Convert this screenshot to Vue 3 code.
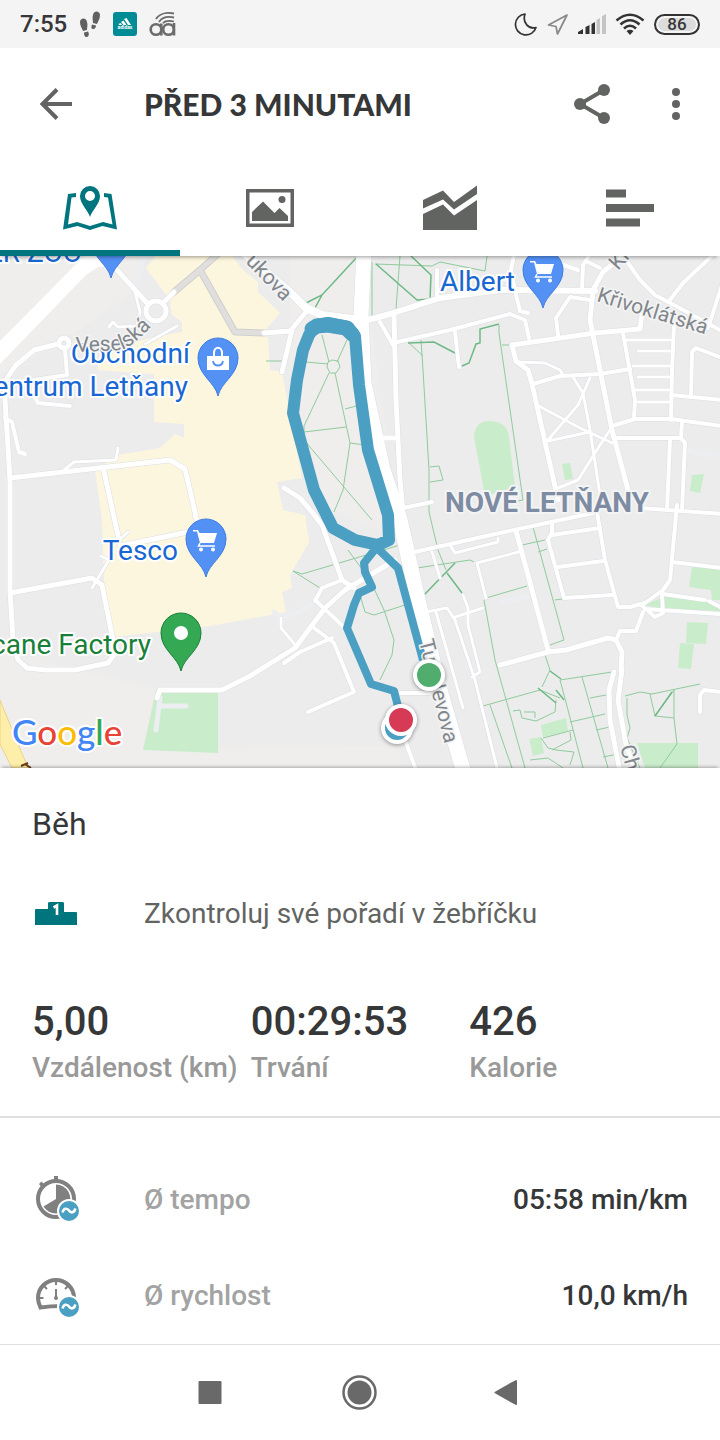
<template>
  <div class="screen">
    <div class="status-bar">
      <div class="status-group">
        <span class="status-time">7:55</span>
        <svg width="22" height="28" viewBox="0 0 22 28" fill="#616161">
          <path d="M1 12C1 8 7 7 8 12C9 15 8 17 8 20L4 21C3 18 1 16 1 12ZM5 22.500L9 21.500C11 25 9 27 7.500 27C5.500 27 5 25 5 22.500Z"/>
          <path d="M14 5C15 0 21 1 21 5C21 9 19 11 18 14L14 13C14 10 13 8 14 5ZM13 14.500L17 15.500C17 18 15.500 19.500 14 19C12 19 12 17 13 14.500Z"/>
        </svg>
        <svg width="24" height="24" viewBox="0 0 24 24">
          <rect width="24" height="24" rx="3" fill="#008c95"/>
          <g fill="#fff">
            <path d="M11 7L13.500 6L18 13H15Z"/>
            <path d="M8 10L10.500 8.500L13.500 13H10.500Z"/>
            <path d="M5.500 12L7.500 11L9 13H6Z"/>
          </g>
          <text x="12" y="17" text-anchor="middle" fill="#fff" class="app-mark">adidas</text>
        </svg>
        <svg width="27" height="26" viewBox="0 0 27 26" fill="none" stroke="#6b6b6b" stroke-width="2.600">
          <circle cx="7" cy="18.500" r="5.300"/>
          <path d="M12.300 12.500V24.500"/>
          <circle cx="19.500" cy="18.500" r="5.300"/>
          <path d="M25 24.500V12"/>
          <path d="M7 8C10 3 17 1 25 2.500M10 11C13 6.500 18 5 25 6.500M14 12C16 10 19 9 25 10.500" stroke-width="1.800"/>
        </svg>
      </div>
      <div class="status-group status-right">
        <svg width="24" height="24" viewBox="0 0 24 24" fill="none" stroke="#333" stroke-width="1.700" stroke-linejoin="round">
          <path d="M11 2A10.500 10.500 0 1 0 22 15.500C15 17.500 8 11 11 2Z"/>
        </svg>
        <svg width="22" height="24" viewBox="0 0 22 24" fill="none" stroke="#888" stroke-width="1.700" stroke-linejoin="round">
          <path d="M20 3L1.500 13L9 14.500L10.500 22Z"/>
        </svg>
        <svg width="28" height="22" viewBox="0 0 28 22">
          <path d="M0 21V19L5 16V21Z" fill="#333"/>
          <path d="M7.500 21V14L11.500 12V21ZM13.500 21V11L17 9V21Z" fill="#333"/>
          <path d="M18.500 21V7L22 5V21ZM24 21V3L28 1V21Z" fill="#c4c4c4"/>
        </svg>
        <svg width="30" height="22" viewBox="0 0 30 22" fill="none" stroke="#333" stroke-width="2.600">
          <path d="M1.500 7.500Q15 -4 28.500 7.500"/>
          <path d="M5.500 11.500Q15 3 24.500 11.500"/>
          <path d="M9 15.500Q15 10 21 15.500"/>
          <path d="M15 22L11.500 18Q15 15.500 18.500 18Z" fill="#333" stroke="none"/>
        </svg>
        <span class="battery">86</span>
      </div>
    </div>

    <header class="header">
      <button class="icon-button" type="button" aria-label="Zpět">
        <svg width="48" height="48" viewBox="0 0 48 48" fill="none" stroke="#626462" stroke-width="4">
          <path d="M40 24H11M25 9.500L10.500 24L25 38.500"/>
        </svg>
      </button>
      <h1 class="title">PŘED 3 MINUTAMI</h1>
      <button class="icon-button" type="button" aria-label="Sdílet">
        <svg width="48" height="48" viewBox="0 0 48 48" fill="#626462">
          <path d="M36 10L12 24L36 38" fill="none" stroke="#626462" stroke-width="4"/>
          <circle cx="36" cy="10" r="6"/>
          <circle cx="12" cy="24" r="6"/>
          <circle cx="36" cy="38" r="6"/>
        </svg>
      </button>
      <button class="icon-button menu-button" type="button" aria-label="Další možnosti">
        <svg width="48" height="48" viewBox="0 0 48 48" fill="#626462">
          <circle cx="24" cy="12" r="4"/>
          <circle cx="24" cy="24" r="4"/>
          <circle cx="24" cy="36" r="4"/>
        </svg>
      </button>
    </header>

    <div class="tabs" role="tablist">
      <button
        v-for="tab in tabs"
        :key="tab.id"
        type="button"
        role="tab"
        class="tab"
        :class="{ 'tab-active': tab.id === activeTab }"
        :aria-selected="tab.id === activeTab"
        :aria-label="tab.label"
        @click="activeTab = tab.id"
      >
        <svg width="56" height="48" viewBox="0 0 56 48" fill="currentColor">
          <path v-for="d in tab.shapes" :key="d" :d="d" fill-rule="evenodd"/>
        </svg>
      </button>
    </div>

    <svg class="map" viewBox="0 256 720 512" role="img" aria-label="Mapa trasy">
      <rect y="256" width="720" height="512" fill="#ececec"/>
      <path d="M0 256H140L136 290L60 343L0 375ZM290 256H362L400 540L310 500L290 420ZM0 650L160 690L143 750L400 746V768H0Z" fill="#efeeec"/>
      <path :d="commercialArea" fill="#fdf6de"/>
      <path v-for="d in parks" :key="d" :d="d" fill="#c9edca"/>

      <g fill="none" stroke-width="1">
        <path v-for="d in trails" :key="d" :d="d" stroke="#8fcb9d"/>
        <path v-for="d in darkTrails" :key="d" :d="d" stroke="#6db985" stroke-width="1.500"/>
      </g>

      <g fill="none" stroke-linejoin="round" stroke-linecap="round">
        <path v-for="d in accessRoads" :key="d" :d="d" stroke="#eceef2" stroke-width="5"/>
        <path d="M174 292L200 270L220 252M200 270L235 332L264 333" stroke="#cfcfce" stroke-width="7"/>
        <path d="M174 292L200 270L220 252M200 270L235 332L264 333" stroke="#e0dfdd" stroke-width="5"/>
        <path v-for="road in roads" :key="road.d" :d="road.d" stroke="#dcdee3" :stroke-width="road.w + 1"/>
        <path v-for="road in roads" :key="road.d" :d="road.d" stroke="#fff" :stroke-width="road.w"/>
      </g>
      <path d="M0 341L78 262L84 256H114V266L98 267L86 275L0 364Z" fill="#fff"/>
      <path d="M0 700L28 768H12L0 744Z" fill="#fdeeaa" stroke="#ead28c"/>
      <path d="M21 766L28 763M25 764L31 768" stroke="#6b3e14" stroke-width="2"/>

      <g fill="none" stroke="#4b9fc3" stroke-linejoin="round">
        <path d="M309 335L316 325L328 323L348 327L355 336L359 385L368 450L388 515L389 540L378 545L355 540L333 528L314 490L293 413L297 380L303 350Z" stroke-width="12"/>
        <path d="M312 329L317 326L328 325L346 328L352 334" stroke-width="15" stroke-linecap="round"/>
        <path d="M374 545L398 568L423 660" stroke-width="8"/>
        <path d="M377 547L364 563L365 572L372 587L359 593L354 605L347 628L371 684L394 691L400 714" stroke-width="8"/>
      </g>

      <text class="district-label" x="547" y="512" text-anchor="middle">NOVÉ LETŇANY</text>
      <g class="place-labels" text-anchor="end">
        <text
          v-for="place in places"
          :key="place.name"
          :x="place.x"
          :y="place.y"
          :fill="place.color"
        >{{ place.name }}</text>
      </g>
      <g class="street-labels">
        <path id="street-veselska" d="M76 352L120 350Q134 348 164 312" fill="none" stroke="none"/>
        <text><textPath href="#street-veselska">Veselská</textPath></text>
        <text transform="translate(245 262) rotate(46)">ukova</text>
        <text transform="translate(596 301) rotate(17)">Křivoklátská</text>
        <text transform="translate(618 271) rotate(-48)">Klá</text>
        <text transform="translate(419 641) rotate(76)">Tupolevova</text>
        <text transform="translate(620 747) rotate(74)">Ch</text>
      </g>

      <g v-for="pin in pins" :key="pin.x" :transform="`translate(${pin.x} ${pin.y})`">
        <path
          d="M0 38C-3 24 -20 17 -20 0A20 20 0 0 1 20 0C20 17 3 24 0 38Z"
          :fill="pin.fill"
          :stroke="pin.stroke"
        />
        <circle v-if="pin.icon === 'dot'" r="7" fill="#fff"/>
        <g v-if="pin.icon === 'cart'" fill="#fff">
          <path d="M-13 -9H-8L-6.500 -6H11L8 4H-6L-9 -7.500H-13Z"/>
          <path d="M-6 4L-7.500 7H9" fill="none" stroke="#fff" stroke-width="1.500"/>
          <circle cx="-5" cy="10.500" r="2"/>
          <circle cx="7" cy="10.500" r="2"/>
        </g>
        <g v-if="pin.icon === 'bag'" fill="none">
          <path d="M-11 -2H11V12H-11Z" fill="#fff"/>
          <path d="M-4 -2V-5C-4 -12 4 -12 4 -5V-2" stroke="#fff" stroke-width="2"/>
          <path d="M-5 3C-4 9 4 9 5 3" stroke="#5491f5" stroke-width="1.800"/>
        </g>
      </g>

      <g class="markers">
        <circle cx="397" cy="728" r="14" fill="#4b9fc3"/>
        <circle cx="429" cy="675" r="14" fill="#50ad6e"/>
        <circle cx="401" cy="720" r="14" fill="#d73a54"/>
      </g>

      <text class="google" x="12" y="745">
        <tspan fill="#4285f4">G</tspan><tspan fill="#ea4335">o</tspan><tspan fill="#fbbc05">o</tspan><tspan fill="#4285f4">g</tspan><tspan fill="#34a853">l</tspan><tspan fill="#ea4335">e</tspan>
      </text>
    </svg>

    <main class="details">
      <h2 class="sport">Běh</h2>
      <a class="leaderboard" href="#">
        <svg width="48" height="48" viewBox="0 0 48 48">
          <path d="M3 35V20Q3 19 4 19H16V13Q16 12 18 12H30Q32 12 32 13V22H44Q45 22 45 23V35Z" fill="#00757d"/>
          <path d="M21.500 17.500L25 15.500V25" fill="none" stroke="#fff" stroke-width="2.600"/>
        </svg>
        <span>Zkontroluj své pořadí v žebříčku</span>
      </a>
      <dl class="stats">
        <div v-for="stat in stats" :key="stat.label" class="stat">
          <dd class="stat-value">{{ stat.value }}</dd>
          <dt class="stat-label">{{ stat.label }}</dt>
        </div>
      </dl>
    </main>

    <dl class="averages">
      <div class="average">
        <svg width="48" height="48" viewBox="0 0 48 48" fill="none" stroke="#808080">
          <circle cx="24" cy="23" r="18" stroke-width="4"/>
          <path d="M22 0H26V5H22ZM7 8L9.500 5.500L13 9L10 12Z" fill="#808080" stroke="none"/>
          <path d="M24 23V8.500A14.500 14.500 0 1 1 11.500 30.500Z" fill="#808080" stroke="none"/>
          <circle cx="37" cy="35" r="11" fill="#4b9fc3" stroke="#fff" stroke-width="2"/>
          <path d="M30.500 36.500C32 30.500 36 33 37 34.500C39 37.500 42 37 43.500 32.500" stroke="#fff" stroke-width="2.600"/>
        </svg>
        <dt>Ø tempo</dt>
        <dd>05:58 min/km</dd>
      </div>
      <div class="average">
        <svg width="48" height="48" viewBox="0 0 48 48" fill="none" stroke="#808080">
          <path d="M30 34Q18 34 8.500 35.500Q6 30 6 26A18 18 0 0 1 42 26V30" stroke-width="4"/>
          <path d="M8 26H11.500M12.500 14.500L15 17M24 8V13M35.500 14.500L33 17M36.500 26H40" stroke-width="2"/>
          <path d="M24 17V26" stroke-width="2"/>
          <circle cx="24" cy="26" r="2" fill="#808080" stroke="none"/>
          <circle cx="37" cy="35" r="11" fill="#4b9fc3" stroke="#fff" stroke-width="2"/>
          <path d="M30.500 36.500C32 30.500 36 33 37 34.500C39 37.500 42 37 43.500 32.500" stroke="#fff" stroke-width="2.600"/>
        </svg>
        <dt>Ø rychlost</dt>
        <dd>10,0 km/h</dd>
      </div>
    </dl>

    <nav class="system-nav">
      <button class="icon-button" type="button" aria-label="Poslední aplikace">
        <svg width="48" height="48" viewBox="0 0 48 48"><rect x="12.500" y="12" width="23" height="23" rx="1" fill="#696969"/></svg>
      </button>
      <button class="icon-button" type="button" aria-label="Domů">
        <svg width="48" height="48" viewBox="0 0 48 48">
          <circle cx="23.500" cy="23.500" r="16" fill="none" stroke="#696969" stroke-width="2.500"/>
          <circle cx="23.500" cy="23.500" r="12" fill="#696969"/>
        </svg>
      </button>
      <button class="icon-button" type="button" aria-label="Zpět na předchozí obrazovku">
        <svg width="48" height="48" viewBox="0 0 48 48"><path d="M9.500 23.500L30 12V35Z" fill="#696969" stroke="#696969" stroke-width="2" stroke-linejoin="round"/></svg>
      </button>
    </nav>
  </div>
</template>

<script setup>
import { ref } from 'vue'

const activeTab = ref('map')

const tabs = [
  {
    id: 'map',
    label: 'Mapa',
    shapes: [
      'M14 9L6 10L1 45.500L15.500 42L28 46L40.500 42L55 45.500L49.500 10L42 9V13L46 13.500L50.500 40.500L41 38L28 42L15 38L6 40.500L9.500 13.500L14 13Z',
      'M28 33C26 26 18 20 18 12A10 10 0 0 1 38 12C38 20 30 26 28 33ZM28 7A5 5 0 1 0 28 17A5 5 0 1 0 28 7Z',
    ],
  },
  {
    id: 'photos',
    label: 'Fotky',
    shapes: [
      'M4 5H52V43H4ZM7.500 8.500V39.500H48.500V8.500Z',
      'M10 37V28L21 17.500L32.500 29L37.500 24L46 32V37Z',
      'M40 12A3.500 3.500 0 1 0 40 19A3.500 3.500 0 1 0 40 12Z',
    ],
  },
  {
    id: 'charts',
    label: 'Grafy',
    shapes: [
      'M1 16L21 6.500L32 18L55 1.500V10L32 25.500L21 15.500L1 24.500Z',
      'M1 30L21 20.500L32 31.500L55 16V46H1Z',
    ],
  },
  {
    id: 'splits',
    label: 'Mezičasy',
    shapes: ['M4 5.500H24V13.500H4Z', 'M4 20H52V28H4Z', 'M4 34.500H38V42.500H4Z'],
  },
]

const stats = [
  { value: '5,00', label: 'Vzdálenost (km)' },
  { value: '00:29:53', label: 'Trvání' },
  { value: '426', label: 'Kalorie' },
]

const commercialArea =
  'M156 256L146 268L170 300L172 315L182 322V332L150 338L125 345L98 360V370L154 374V422L184 424V438L175 434L160 448L118 455L95 470L102 520L104 580L113 637L210 626L286 612L282 592L292 588L290 575L309 542L305 515L283 510L277 482L302 478L282 372L270 370L268 338L262 334L280 313L258 292V282L243 270L232 256Z'

const parks = [
  'M474 437Q475 420 491 421Q507 422 509 437L515 487L485 496Z',
  'M562 464L570 463L573 479L565 480Z',
  'M692 475L704 474L700 493L690 491Z',
  'M692 567L720 569V600H712L711 590L689 587Z',
  'M645 605L665 596L700 599L720 606V611L665 610Z',
  'M687 622L708 623L706 644L686 643Z',
  'M680 643L694 644L691 669L678 668Z',
  'M637 743H698V768H645Z',
  'M541 725L566 718L568 731L543 737Z',
  'M529 739L541 737L544 753L533 756Z',
  'M156 690H218V753L143 750Z',
]

const trails = [
  'M322 335L329 362M347 340L337 362M306 362L328 364M266 361H282M328 362L332 360L338 361L340 367L336 373L330 373L327 367ZM329 373L304 426V440M335 373L350 443L343 490L334 512M304 432L346 427M304 440L372 520M345 409L360 405M350 443L365 445',
  'M372 262V316L385 316L396 309L400 256M375 264L432 266L440 262L485 271L487 256',
  'M421 340L423 370L429 470V512L438 550L446 570M430 467L439 466L443 480L430 482M408 342L423 356M499 325V333L523 500L513 502M502 345H510',
  'M413 556L417 568L470 560L474 562M484 600L495 660L525 768M486 598L527 586M483 706L540 690L560 698M490 705L512 768M533 527L564 640L550 645M522 545L545 540M538 552L547 549M555 600L562 599',
  'M545 655L550 670L542 687M560 680L612 672M560 680L568 710L583 768M582 677L608 768M590 698L606 695M570 722L605 714M596 730L610 727M603 757L618 754',
  'M513 711L520 710L522 718L536 721L555 712L556 700M524 712H535V718M543 738L573 730M552 750L571 740L570 732M541 738L548 748L556 750L574 752L570 765M530 760L548 758L563 768',
  'M625 696L640 692L652 694L700 684M627 698V715L630 728L627 738L640 768M650 694L655 716L674 690V718L655 716M674 718L677 744L660 768',
  'M293 571L302 574L400 545M293 571L320 588M370 580L384 610L394 640L392 655L380 680M360 595L365 612L374 615L405 605M348 550L370 580',
]

const darkTrails = [
  'M376 264L417 300L430 299L431 275L411 256M358 256L322 295L306 303M322 295L315 308',
  'M408 343L434 342L455 353M462 366L469 363L476 344L480 343V329L499 324',
  'M424 595L455 563M447 573L462 593M550 671L561 679M538 688L556 703M556 690L564 700M655 716L672 692',
]

const accessRoads = [
  'M144 256L136 290',
  'M274 612L282 617L297 613L315 602',
  'M160 698L156 730M160 706H186',
  'M502 602L530 596',
  'M688 450L700 454L720 455',
]

const roads = [
  // west side
  { d: 'M108 260L147 303M163 303L174 292', w: 5 },
  { d: 'M156 301A10 10 0 1 0 156 321A10 10 0 1 0 156 301', w: 5 },
  { d: 'M134 288L140 312L137 326L118 327L113 322L109 327M145 344L177 326', w: 3 },
  { d: 'M64 338A5 5 0 1 0 64 348A5 5 0 1 0 64 338M58 344L34 350L15 366L6 380L5 400L10 480V590L13 640L18 660L27 668L45 670H75L108 663L114 655L113 640L102 585L92 578L10 593', w: 5 },
  { d: 'M65 350L67 375L34 380V395L38 403L70 406M5 418L12 422L19 452L25 454', w: 4 },
  { d: 'M10 478L170 460L185 469L195 512L198 530L120 546M103 467L112 508L119 540', w: 5 },
  { d: 'M64 470L74 462L116 460L118 448M118 541L128 532M101 556L109 560L92 588', w: 3 },
  { d: 'M240 250L290 292L306 308L322 315L360 320', w: 8 },
  { d: 'M264 333L290 331L306 312M292 330L282 372', w: 5 },
  { d: 'M284 488L300 498L312 512L322 525L342 580L354 588', w: 5 },
  { d: 'M157 698L160 690H222L250 676L295 648L325 608L345 590L395 560', w: 5 },
  { d: 'M315 601L322 588L342 580M315 600L345 628M284 663L300 652L332 638M314 628L334 643L354 692L308 712', w: 4 },
  { d: 'M281 618V628L297 647', w: 3 },
  // main boulevard
  { d: 'M364 250L361 315L364 383L383 470L400 520L418 600L440 690L466 780', w: 15 },
  // north east
  { d: 'M368 320L390 314L440 298L500 290L595 291', w: 6 },
  { d: 'M515 250L511 270L516 295L520 311L528 313M437 270V295', w: 4 },
  { d: 'M393 343L450 330L510 314L525 320L529 338M380 322L393 345M455 332L459 367', w: 4 },
  { d: 'M394 315L396 400L400 480L403 512L412 550M380 438H398', w: 5 },
  { d: 'M512 345L595 333L640 329L642 315M512 345L516 361L528 370L532 384L558 500', w: 5 },
  { d: 'M516 362L545 363L560 370L563 375', w: 3 },
  { d: 'M533 384L560 376L600 374L630 369', w: 4 },
  { d: 'M628 252L603 272L593 290L590 320L600 370L612 430L628 490', w: 5 },
  { d: 'M573 377L583 393L590 430L600 495M590 378L578 405L548 440M537 405L580 428L612 443M548 441L590 432M610 430L600 445L578 480L558 488', w: 3 },
  { d: 'M555 262L578 270M582 290L583 265L590 254M588 262L600 268M590 300L570 297L556 318L558 335', w: 4 },
  { d: 'M626 260L640 280L655 295L674 305L720 330M716 252L683 283L670 300M722 285L708 328', w: 4 },
  { d: 'M674 325L672 370L671 420M623 333L635 400L634 418M612 426L635 419H671L722 426', w: 4 },
  { d: 'M625 340H672M638 351H672M633 366H672M638 377H672M635 390H670M638 402H670', w: 3 },
  { d: 'M671 395L722 400M691 396L692 352L696 348L722 358M682 422L681 438M615 438H681L685 443L682 510M670 440L667 510', w: 4 },
  // south east
  { d: 'M403 508L432 502M410 553L500 533L593 513M640 508L722 514', w: 4 },
  { d: 'M516 531L528 575L548 650M500 665L548 652L566 650L608 638L616 640L622 652L621 672', w: 5 },
  { d: 'M522 551L477 563L486 598M450 545L455 553L498 542V538M432 552L440 578', w: 3 },
  { d: 'M552 524V533L548 540L564 598L612 595M552 535L600 528M558 567L603 561', w: 4 },
  { d: 'M597 512L605 560L618 607H630L645 603L663 590L670 580L677 505', w: 4 },
  { d: 'M617 638L620 631H636L643 612M640 604L655 617L663 613L662 595M645 609L720 614M663 594L705 600M709 601L722 608M672 562L722 568', w: 4 },
  { d: 'M614 672L609 690L610 720L620 772M622 670L618 700L626 745L636 772', w: 5 },
  { d: 'M426 612L447 608L455 620L475 680L498 772M436 612L463 708M463 595L468 608L468 625L480 672L472 677M455 617L483 608', w: 3 },
  { d: 'M400 693H430M405 740L416 770M700 712V695L704 690L722 692', w: 4 },
]

const places = [
  { name: 'ER ZOO', x: 82, y: 262, color: '#1967d2' },
  { name: 'Obchodní', x: 190, y: 363, color: '#1967d2' },
  { name: 'entrum Letňany', x: 188, y: 396, color: '#1967d2' },
  { name: 'Tesco', x: 178, y: 560, color: '#1967d2' },
  { name: 'Albert', x: 515, y: 291, color: '#1967d2' },
  { name: 'cane Factory', x: 151, y: 654, color: '#188038' },
]

const pins = [
  { x: 111, y: 240, icon: 'none', fill: '#5491f5', stroke: '#3f7de0' },
  { x: 218, y: 358, icon: 'bag', fill: '#5491f5', stroke: '#3f7de0' },
  { x: 543, y: 270, icon: 'cart', fill: '#5491f5', stroke: '#3f7de0' },
  { x: 206, y: 539, icon: 'cart', fill: '#5491f5', stroke: '#3f7de0' },
  { x: 181, y: 633, icon: 'dot', fill: '#34a853', stroke: '#188038' },
]
</script>

<style>
body {
  margin: 0;
  background: #fff;
}
</style>

<style scoped>
.screen {
  min-height: 100vh;
  display: flex;
  flex-direction: column;
  background: #fff;
  color: #363738;
  font-family: Roboto, "Noto Sans", sans-serif;
  font-size: 28px;
  line-height: 32px;
}

svg {
  display: block;
  flex-shrink: 0;
}

h1,
h2,
dl,
dd {
  margin: 0;
}

.status-bar {
  height: 48px;
  padding: 0 20px;
  display: flex;
  align-items: center;
  justify-content: space-between;
  background: #f4f4f4;
}

.status-group {
  display: flex;
  align-items: center;
  gap: 12px;
}

.status-right {
  gap: 9px;
}

.status-time {
  font-size: 24px;
  font-weight: 500;
}

.app-mark {
  font-size: 5px;
  font-weight: 700;
}

.battery {
  box-sizing: border-box;
  width: 46px;
  height: 21px;
  border: 2px solid #333;
  border-radius: 11px;
  background: #dcdcdc;
  box-shadow: inset 0 0 0 2px #f4f4f4;
  font-size: 17px;
  font-weight: 500;
  line-height: 17px;
  text-align: center;
}

.header {
  height: 112px;
  padding: 0 20px 0 32px;
  display: flex;
  align-items: center;
}

.icon-button {
  width: 48px;
  height: 48px;
  padding: 0;
  border: 0;
  background: none;
}

.menu-button {
  margin-left: 36px;
}

.title {
  flex: 1;
  padding-left: 64px;
  font-family: Lato, sans-serif;
  font-size: 30px;
  font-weight: 900;
}

.tabs {
  position: relative;
  height: 96px;
  display: flex;
  box-shadow: 0 4px 4px -3px rgba(0, 0, 0, 0.4);
}

.tab {
  flex: 1;
  padding: 0;
  border: 0;
  display: flex;
  align-items: center;
  justify-content: center;
  background: #fff;
  color: #626462;
}

.tab-active {
  color: #00757d;
  box-shadow: inset 0 -6px #00757d;
}

.map {
  width: 100%;
  height: auto;
}

.street-labels {
  fill: #80868b;
  stroke: #f4f4f4;
  stroke-width: 3px;
  paint-order: stroke;
  font-size: 21px;
}

.place-labels {
  stroke: #fff;
  stroke-width: 4px;
  stroke-linejoin: round;
  paint-order: stroke;
  font-size: 28px;
}

.district-label {
  fill: #7d8ca3;
  stroke: #f4f4f4;
  stroke-width: 4px;
  stroke-linejoin: round;
  paint-order: stroke;
  font-size: 28px;
  font-weight: 700;
}

.markers {
  stroke: #fff;
  stroke-width: 4px;
  filter: drop-shadow(0 1px 2px rgba(0, 0, 0, 0.4));
}

.google {
  font-family: Lato, sans-serif;
  font-size: 35px;
  font-weight: 500;
  stroke: #fff;
  stroke-width: 4px;
  stroke-linejoin: round;
  paint-order: stroke;
}

.details {
  padding: 40px 32px 32px;
  border-bottom: 2px solid #e0e0e0;
  box-shadow: 0 -3px 3px -2px rgba(0, 0, 0, 0.3);
}

.sport {
  font-size: 32px;
  font-weight: 400;
}

.leaderboard {
  margin-top: 50px;
  display: flex;
  align-items: center;
  gap: 64px;
  color: #626462;
  text-decoration: none;
}

.stats {
  margin-top: 60px;
  display: grid;
  grid-template-columns: repeat(3, 1fr);
}

.stat {
  display: flex;
  flex-direction: column;
  gap: 6px;
  font-weight: 500;
  white-space: nowrap;
}

.stat-value {
  font-size: 40px;
  line-height: 48px;
}

.stat-label {
  color: #999;
}

.averages {
  padding: 34px 32px 0;
}

.average {
  height: 96px;
  display: flex;
  align-items: center;
  font-weight: 500;
}

.average dt {
  flex: 1;
  padding-left: 64px;
  color: #a3a3a3;
}

.system-nav {
  box-sizing: border-box;
  height: 96px;
  margin-top: auto;
  border-top: 1px solid #e0e0e0;
  display: flex;
  align-items: center;
  justify-content: center;
  gap: 102px;
}
</style>
